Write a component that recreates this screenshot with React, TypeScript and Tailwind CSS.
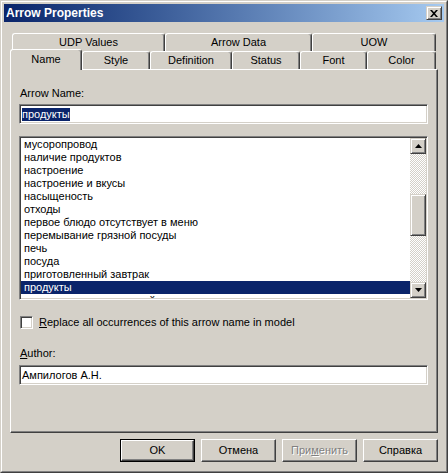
import React from 'react'

const items = [
  'мусоропровод',
  'наличие продуктов',
  'настроение',
  'настроение и вкусы',
  'насыщеность',
  'отходы',
  'первое блюдо отсутствует в меню',
  'перемывание грязной посуды',
  'печь',
  'посуда',
  'приготовленный завтрак',
  'продукты',
  'производственное устройство',
]

const sunken =
  'border border-t-[#808080] border-l-[#808080] border-r-white border-b-white shadow-[inset_1px_1px_#404040,inset_-1px_-1px_#d4d0c8]'
const raised =
  'border border-t-[#d4d0c8] border-l-[#d4d0c8] border-r-[#404040] border-b-[#404040] shadow-[inset_1px_1px_#fff,inset_-1px_-1px_#808080]'
const tab =
  'flex items-center justify-center h-[18px] bg-[#d4d0c8] border-l border-t border-r border-l-white border-t-white border-r-[#404040] shadow-[inset_-1px_0_#808080] rounded-t-[3px]'

function Arrow({ up }: { up?: boolean }) {
  return (
    <svg width="7" height="4" viewBox="0 0 7 4">
      {up ? <path d="M3.5 0 L7 4 L0 4 Z" fill="#000" /> : <path d="M0 0 L7 0 L3.5 4 Z" fill="#000" />}
    </svg>
  )
}

function Button({ children, isDefault, disabled }: { children: React.ReactNode; isDefault?: boolean; disabled?: boolean }) {
  const inner = (
    <div
      className={`flex h-full w-full items-center justify-center border border-t-white border-l-white border-r-[#404040] border-b-[#404040] shadow-[inset_-1px_-1px_#808080] ${
        disabled ? 'text-[#808080] [text-shadow:1px_1px_#fff]' : 'text-black'
      }`}
    >
      {children}
    </div>
  )
  return (
    <div className={`h-[23px] w-[75px] ${isDefault ? 'border border-black' : ''}`}>{inner}</div>
  )
}

export default function App() {
  return (
    <div className="h-[473px] w-[448px] bg-[#d4d0c8] font-['Liberation_Sans',Arial,sans-serif] text-[11px] leading-[13px] text-black border border-t-[#d4d0c8] border-l-[#d4d0c8] border-r-[#404040] border-b-[#404040]">
      <div className="flex h-full flex-col p-[2px] border border-t-white border-l-white border-r-[#808080] border-b-[#808080]">
        {/* title bar */}
        <div className="flex h-[18px] items-center justify-between bg-gradient-to-r from-[#0a246a] to-[#a6caf0] pl-[2px] pr-[2px]">
          <span className="text-[12px] font-bold text-white">Arrow Properties</span>
          <div className={`flex h-[14px] w-[16px] items-center justify-center bg-[#d4d0c8] ${raised}`}>
            <svg width="8" height="7" viewBox="0 0 8 7">
              <path d="M0 0 L2 0 L4 2.3 L6 0 L8 0 L5 3.5 L8 7 L6 7 L4 4.7 L2 7 L0 7 L3 3.5 Z" fill="#000" />
            </svg>
          </div>
        </div>

        {/* tabs */}
        <div className="mt-[11px] ml-[8px] flex">
          <div className={`${tab} w-[153px]`}>UDP Values</div>
          <div className={`${tab} w-[147px]`}>Arrow Data</div>
          <div className={`${tab} w-[124px]`}>UOW</div>
        </div>
        <div className="ml-[8px] flex">
          <div className={`${tab} relative z-10 -mt-[2px] -ml-[2px] -mb-px h-[21px] w-[72px] pb-[2px]`}>Name</div>
          <div className={`${tab} w-[68px]`}>Style</div>
          <div className={`${tab} w-[82px]`}>Definition</div>
          <div className={`${tab} w-[68px]`}>Status</div>
          <div className={`${tab} w-[67px]`}>Font</div>
          <div className={`${tab} w-[69px]`}>Color</div>
        </div>

        {/* panel */}
        <div className="ml-[6px] h-[364px] w-[428px] border border-t-white border-l-white border-r-[#404040] border-b-[#404040] shadow-[inset_-1px_-1px_#808080] pl-[8px] pt-[17px]">
          <div className="ml-px">Arrow Name:</div>
          <div className={`mt-[4px] flex h-[20px] w-[409px] items-center bg-white pl-[2px] ${sunken}`}>
            <span className="bg-[#0a246a] text-white">продукты</span>
          </div>

          <div className={`mt-[12px] flex h-[164px] w-[409px] bg-white ${sunken} p-px`}>
            <div className="flex-1 overflow-hidden">
              {items.map((it) => (
                <div
                  key={it}
                  className={`h-[13px] shrink-0 whitespace-nowrap pl-[3px] ${it === 'продукты' ? 'bg-[#0a246a] text-white' : ''}`}
                >
                  {it}
                </div>
              ))}
            </div>
            <div className="flex w-[16px] flex-col bg-[repeating-conic-gradient(#d4d0c8_0%_25%,#ffffff_0%_50%)] bg-[length:2px_2px]">
              <div className={`flex h-[16px] items-center justify-center bg-[#d4d0c8] ${raised}`}>
                <Arrow up />
              </div>
              <div className="h-[40px]" />
              <div className={`h-[42px] bg-[#d4d0c8] ${raised}`} />
              <div className="flex-1" />
              <div className={`flex h-[16px] items-center justify-center bg-[#d4d0c8] ${raised}`}>
                <Arrow />
              </div>
            </div>
          </div>

          <div className="mt-[16px] ml-px flex h-[13px] items-center gap-[6px]">
            <div className={`h-[13px] w-[13px] bg-white ${sunken}`} />
            <span>
              <span className="underline">R</span>eplace all occurrences of this arrow name in model
            </span>
          </div>

          <div className="mt-[18px] ml-px">
            <span className="underline">A</span>uthor:
          </div>
          <div className={`mt-[5px] flex h-[20px] w-[409px] items-center bg-white pl-[2px] ${sunken}`}>
            Ампилогов А.Н.
          </div>
        </div>

        {/* buttons */}
        <div className="mt-[6px] flex justify-end gap-[6px] pr-[6px]">
          <Button isDefault>OK</Button>
          <Button>Отмена</Button>
          <Button disabled>
            <span>
              При<span className="underline">м</span>енить
            </span>
          </Button>
          <Button>Справка</Button>
        </div>
      </div>
    </div>
  )
}
